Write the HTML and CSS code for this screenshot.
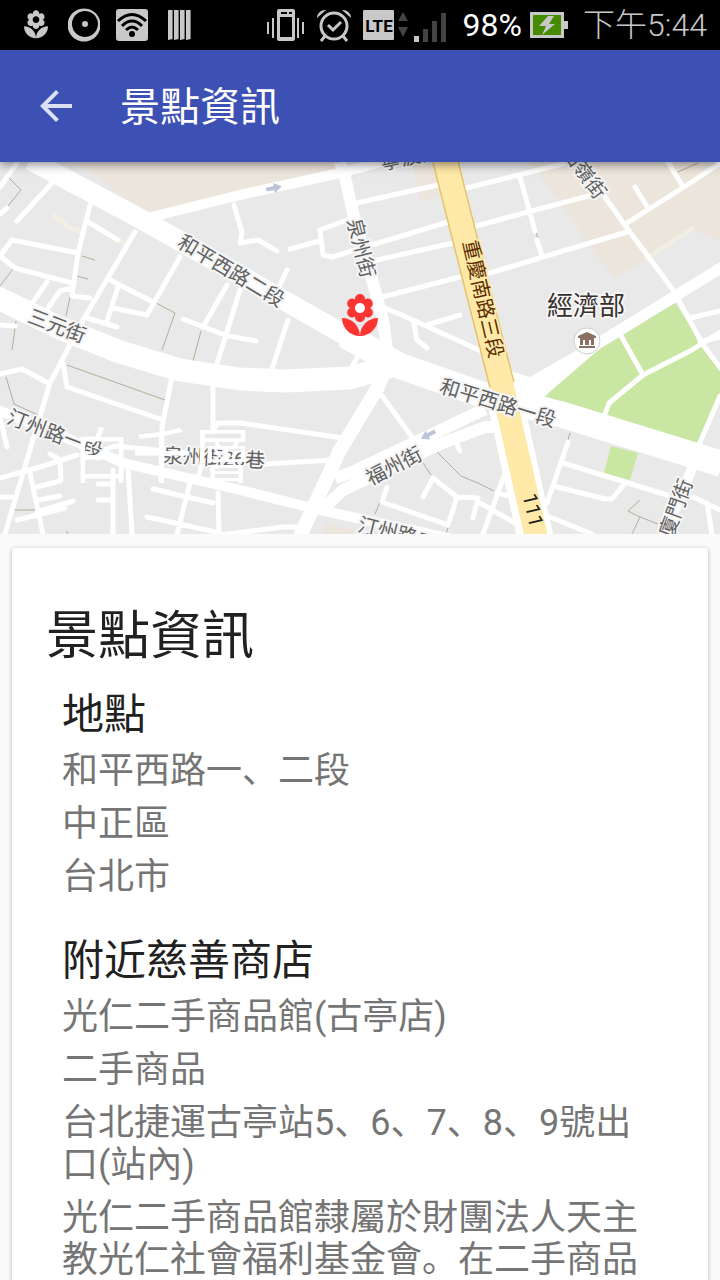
FILE: index.html
```html
<!DOCTYPE html>
<html lang="zh">
<head>
    <meta charset="UTF-8">
    <meta name="viewport" content="width=device-width, initial-scale=1.0">
    <title>景點資訊</title>
    <link rel="stylesheet" href="styles.css">
</head>
<body>
    <div class="status-bar">
        <div class="notifications">
            <svg width="32" height="32" viewBox="0 0 24 24"><use href="#florist"/></svg>
            <svg width="32" height="34" viewBox="0 0 32 34">
                <path fill-rule="evenodd" d="M16 .5a16.5 16.5 0 1 0 .1 0zM17 3a13 13 0 1 1-.1 0z"/>
                <circle cx="17" cy="16" r="3"/>
            </svg>
            <svg width="32" height="32" viewBox="0 0 32 32">
                <rect width="32" height="32" rx="3"/>
                <g fill="none" stroke="#000" stroke-width="3">
                    <path d="M2 12Q16-1 30 12M6 17Q16 7 26 17M10 21Q16 15 22 21"/>
                </g>
                <circle cx="16" cy="25" r="3" fill="#000"/>
            </svg>
            <svg width="32" height="32" viewBox="0 0 32 32">
                <path d="M4 1h5v29l-5 1zM10 1h5v29l-5 1zM16 1h5v29l-5 1zM22 1h5v29l-5 1z"/>
                <path fill="#777" d="M8 1h1v29H8zM14 1h1v29h-1zM20 1h1v29h-1zM26 1h1v29h-1z"/>
            </svg>
        </div>
        <div class="system">
            <svg width="40" height="34" viewBox="0 0 40 34">
                <path d="M2 14h2v12H2zM7 10h2v20H7zM32 10h2v20h-2zM37 14h2v12h-2z"/>
                <path fill-rule="evenodd" d="M14 1h14a2 2 0 0 1 2 2v28a2 2 0 0 1-2 2H14a2 2 0 0 1-2-2V3a2 2 0 0 1 2-2zM15 9v20h12V9z"/>
                <path fill="#000" d="M16 4h6v2h-6zM24 4h3v2h-3z"/>
            </svg>
            <svg width="42" height="34" viewBox="0 0 42 34">
                <g fill="none" stroke="#c8c8c8" stroke-width="3">
                    <circle cx="21" cy="18" r="13"/>
                    <path d="M15 17l5 5 8-8M12 28l-4 5M30 28l4 5"/>
                </g>
                <path d="M4 10a8 8 0 0 1 9-8zM38 10a8 8 0 0 0-9-8z"/>
            </svg>
            <svg width="92" height="34" viewBox="0 0 92 34">
                <rect y="2" width="31" height="30" rx="1"/>
                <text class="lte" x="16" y="24">LTE</text>
                <path fill="#444" d="M35 13l5-9 5 9zM35 19h10l-5 10zM60 21h5v13h-5zM69 13h5v21h-5zM78 5h5v29h-5z"/>
                <rect x="51" y="28" width="5" height="6"/>
            </svg>
            <span class="percent">98%</span>
            <svg width="45" height="28" viewBox="0 0 45 28">
                <path d="M0 1h34v9h4v8h-4v9H0z"/>
                <path fill="#458b00" d="M3 4h28v20H3z"/>
                <path d="M18 5l-9 10h7l-4 9 13-11h-6l5-8z"/>
            </svg>
            <time>下午5:44</time>
        </div>
    </div>

    <header class="toolbar">
        <button class="back" aria-label="返回">
            <svg width="48" height="48" viewBox="0 0 24 24"><path d="M20 11H7.83l5.59-5.59L12 4l-8 8 8 8 1.41-1.41L7.83 13H20v-2z"/></svg>
        </button>
        <h1>景點資訊</h1>
    </header>

    <main class="content">
        <div class="map">
            <svg viewBox="0 162 720 372">
                <defs>
                    <path id="florist" d="M12 22c4.97 0 9-4.03 9-9-4.97 0-9 4.03-9 9zM5.6 10.25c0 1.38 1.12 2.5 2.5 2.5.53 0 1.01-.16 1.42-.44l-.02.19c0 1.38 1.12 2.5 2.5 2.5s2.5-1.12 2.5-2.5l-.02-.19c.4.28.89.44 1.42.44 1.38 0 2.5-1.12 2.5-2.5 0-1-.59-1.85-1.43-2.25.84-.4 1.43-1.25 1.43-2.25 0-1.38-1.12-2.5-2.5-2.5-.53 0-1.01.16-1.42.44l.02-.19C14.5 2.12 13.38 1 12 1S9.5 2.12 9.5 3.5l.02.19c-.4-.28-.89-.44-1.42-.44-1.38 0-2.5 1.12-2.5 2.5 0 1 .59 1.85 1.43 2.25-.84.4-1.43 1.25-1.43 2.25zM12 5.5c1.38 0 2.5 1.12 2.5 2.5s-1.12 2.5-2.5 2.5S9.5 9.38 9.5 8s1.12-2.5 2.5-2.5zM3 13c0 4.97 4.03 9 9 9 0-4.97-4.03-9-9-9z"/>
                </defs>

                <!-- blocks -->
                <path fill="#ece5dc" d="M76 162L147 214L338 168V162zM412 162L420 201L442 195L436 162zM530 162L593 250L615 279L647 258L693 230L720 241V162zM327 523L355 530V534H322z"/>
                <path fill="#c9e6a2" d="M545 396L598 350L675 303L720 368V398L698 447L605 421zM611 446L638 453L630 480L604 473z"/>

                <!-- footpaths -->
                <path class="footpath" d="M9 178L21 190L8 206M82 256L95 260M77 276L88 279M13 269L0 286M70 297L66 316M156 303L175 313L162 350M16 321L12 350M201 331L193 361M67 365L165 400M6 377L14 404L38 415M13 510H37M421 460L431 475M436 451L461 476L480 484L494 491M380 502L375 514M448 528L446 534M570 433L567 443M640 500L628 511L640 517L658 524M640 517L632 534M678 172L698 163M536 231L538 239M67 531V534"/>
                <path class="lane" stroke="#f1efe3" d="M54 216L70 228L80 231M118 240L126 244M647 258L692 229"/>

                <!-- lanes -->
                <path class="lane" d="M17 163L0 187M52 183L17 221M7 208L0 214M90 205L78 253L72 296L90 298M88 222L118 240M78 253L12 240L0 256L15 268L72 283M47 282L33 302M72 288L60 291L48 308M110 280L153 302M180 257L147 315L113 308M118 287L107 321M87 318L117 327M227 285L203 327M240 290L215 370M183 319L225 335L256 341M234 205L242 232L240 243L258 240L277 251M0 325L15 326"/>
                <path class="lane" d="M357 203L438 185M350 219L320 230L323 255L332 257L448 222M377 260L453 243M290 249L320 241M382 297L460 277M287 270L280 285M383 307L413 320L490 355M413 320L417 340L427 348M427 325L460 315M288 320L270 375M467 188L570 162M476 226L603 192M490 273L543 257L627 232M520 177L535 231M537 240L542 256M627 223L687 185L722 162M668 162L683 187M635 187L648 208M690 318L720 311M700 342L720 337"/>
                <path class="lane" d="M0 374L22 369L48 383M63 363L67 387L163 420M172 377L162 427L161 480M213 387V432M0 478L40 467L77 455M0 417L7 447M30 473L43 534M37 487L60 481M38 500L60 496M37 512L73 501M17 520L65 508M50 454L60 460L61 480M113 470V534M128 467L132 534M98 484H113M98 500H113M153 489L213 503M190 483L177 534M147 517L220 533M218 493L219 532M0 497H12M100 451L115 446L235 458M213 430L218 423L240 423L343 438M265 464L333 460M380 393L412 437M220 535L283 527H300M455 440L460 451M423 497L433 478L457 497L448 525L382 502L387 487M457 497L478 498L473 518"/>
                <path class="lane" d="M568 442L547 503M563 463L667 495M557 487L605 499L612 499L625 483M693 497L720 510M707 503L712 534M720 396L698 447M550 517L592 534M480 503L515 523M505 473L483 534M497 493L513 497M620 334L643 375M720 332L692 350L643 375L609 403L602 422M580 162L627 228L673 290L703 345L722 370M135 232L83 320L50 383L23 473L5 534M360 353L350 370"/>

                <!-- main streets -->
                <g class="street">
                    <path stroke-width="20" d="M30 160L141 219L245 278L350 338"/>
                    <path stroke-width="26" d="M345 335L400 366L480 394L560 414L722 464"/>
                    <path stroke-width="23" d="M-4 297L60 328L120 352L180 370L240 379L285 381L350 378L392 366"/>
                    <path stroke-width="12" d="M340 162L345 177L353 213L373 283L383 320L387 350L383 375"/>
                    <path stroke-width="14" d="M384 372L378 387L340 450L300 536"/>
                    <path stroke-width="10" d="M147 218L240 195L340 173L400 157M-2 410L67 438L123 463L240 490L320 510L480 545"/>
                    <path stroke-width="12" d="M335 478L350 473L420 440L485 409"/>
                    <path stroke-width="12" d="M322 510L343 490L440 444L485 427L500 427"/>
                    <path stroke-width="10" d="M693 466L664 536"/>
                </g>
                <path fill="#fff" d="M510 371L530 377L577 350L720 262V275L598 350L545 396L505 400z"/>

                <!-- provincial highway 111 -->
                <path fill="none" stroke="#fff" stroke-width="36" d="M505 400L536 540"/>
                <path fill="none" stroke="#e5c36c" stroke-width="26" d="M445 160L502 385"/>
                <path fill="none" stroke="#ffe9a8" stroke-width="23" d="M445 160L502 385L537 540"/>

                <path class="arrow" transform="translate(274 188) rotate(-12)" d="M-8-2H0V-5L8 0L0 5V2H-8z"/>
                <path class="arrow" transform="translate(428 435) rotate(153)" d="M-8-2H0V-5L8 0L0 5V2H-8z"/>

                <g class="label">
                    <text transform="translate(231 271) rotate(31)">和平西路二段</text>
                    <text transform="translate(57 326) rotate(21)">三元街</text>
                    <text transform="translate(55 434) rotate(21)">汀州路一段</text>
                    <text transform="translate(214 458) rotate(3)">泉州街26巷</text>
                    <text transform="translate(361 248) rotate(76)">泉州街</text>
                    <text transform="translate(498 403) rotate(17)">和平西路一段</text>
                    <text transform="translate(394 466) rotate(-27)">福州街</text>
                    <text transform="translate(676 508) rotate(-70)">廈門街</text>
                    <text transform="translate(407 536) rotate(14)">汀州路二段</text>
                    <text transform="translate(584 172) rotate(54)">牯嶺街</text>
                    <text transform="translate(420 155) rotate(-12)">寧波西街</text>
                    <text class="highway" transform="translate(483 299) rotate(77)">重慶南路三段</text>
                    <text class="route" transform="translate(533 510) rotate(77)">111</text>
                    <text class="place" x="586" y="306">經濟部</text>
                </g>

                <circle cx="587" cy="341" r="13" fill="#fff" stroke="#d0d0d0"/>
                <path fill="#8d6e63" d="M587 332L596 336V338H578V336zM580 338H594V345H591V340H589V345H585V340H583V345H580zM579 346H595V348H579z"/>

                <circle cx="360" cy="308" r="6" fill="#fff"/>
                <use href="#florist" class="marker" transform="translate(336 292) scale(2)"/>
            </svg>
            <h2 class="map-title">白千層</h2>
        </div>

        <article class="card">
            <h2>景點資訊</h2>
            <section>
                <h3>地點</h3>
                <p>和平西路一、二段</p>
                <p>中正區</p>
                <p>台北市</p>
            </section>
            <section>
                <h3>附近慈善商店</h3>
                <p>光仁二手商品館(古亭店)</p>
                <p>二手商品</p>
                <p>台北捷運古亭站5、6、7、8、9號出口(站內)</p>
                <p>光仁二手商品館隸屬於財團法人天主教光仁社會福利基金會。在二手商品</p>
            </section>
        </article>
    </main>
</body>
</html>
```
FILE: styles.css
```css
* {
    box-sizing: border-box;
}

body {
    font-family: Roboto, "Noto Sans CJK SC", sans-serif;
    background-color: #fafafa;
    color: #212121;
    display: flex;
    flex-direction: column;
    height: 100vh;
    margin: 0;
    overflow: hidden;
}

h1, h2, h3, p {
    margin: 0;
    font-weight: 400;
}

svg {
    display: block;
}

.status-bar {
    background-color: #000;
    color: #c8c8c8;
    fill: #c8c8c8;
    display: flex;
    justify-content: space-between;
    flex-shrink: 0;
    height: 50px;
    padding: 0 13px 0 20px;
    font-size: 32px;
    line-height: 50px;
    white-space: nowrap;
}

.notifications,
.system {
    display: flex;
    align-items: center;
}

.notifications {
    gap: 16px;
}

.system {
    gap: 8px;
}

.status-bar time {
    font-weight: 300;
}

.percent {
    color: #fff;
}

.lte {
    fill: #000;
    font-size: 17px;
    font-weight: 700;
    text-anchor: middle;
}

.toolbar {
    background-color: #3d51b4;
    color: #fff;
    display: flex;
    align-items: center;
    gap: 40px;
    flex-shrink: 0;
    height: 112px;
    padding: 0 32px;
    position: relative;
    z-index: 1;
    box-shadow: 0 2px 10px rgba(0, 0, 0, 0.5);
}

.toolbar h1 {
    font-size: 40px;
    line-height: 56px;
    padding-top: 4px;
}

.back {
    background: none;
    border: none;
    padding: 0;
    cursor: pointer;
    fill: #dce0f4;
}

.content {
    flex: 1;
    overflow-y: auto;
    scrollbar-width: none;
}

.map {
    position: relative;
    background-color: #e9e9e9;
}

.map svg {
    width: 100%;
}

.map-title {
    position: absolute;
    left: 10%;
    bottom: 32px;
    color: #fff;
    font-size: 60px;
    line-height: 88px;
}

.lane {
    fill: none;
    stroke-width: 5;
    stroke-linecap: round;
    stroke-linejoin: round;
}

.lane:not([stroke]) {
    stroke: #fff;
}

.footpath {
    fill: none;
    stroke: #b5ad98;
}

.street {
    fill: none;
    stroke: #fff;
    stroke-linejoin: round;
}

.arrow {
    fill: #bcc5d8;
}

.label {
    fill: #616161;
    stroke: #f5f5f5;
    stroke-width: 4px;
    stroke-linejoin: round;
    paint-order: stroke;
    font-size: 20px;
    text-anchor: middle;
    dominant-baseline: central;
}

.label .highway {
    fill: #5c2d00;
    stroke: #ffe9a8;
}

.label .route {
    fill: #212121;
    stroke: none;
}

.label .place {
    fill: #37302e;
    font-size: 26px;
}

.marker {
    fill: #fc3432;
}

.card {
    background-color: #fff;
    border-radius: 4px;
    box-shadow: 0 1px 4px rgba(0, 0, 0, 0.3);
    margin: 14px 12px;
    padding: 59px 34px;
}

.card h2 {
    font-size: 52px;
    line-height: 60px;
    margin-bottom: 24px;
}

.card section {
    padding: 0 16px;
    margin-bottom: 39px;
}

.card h3 {
    font-size: 42px;
    line-height: 48px;
}

.card p {
    color: #757575;
    font-size: 36px;
    line-height: 42px;
    margin-top: 11px;
}
```
